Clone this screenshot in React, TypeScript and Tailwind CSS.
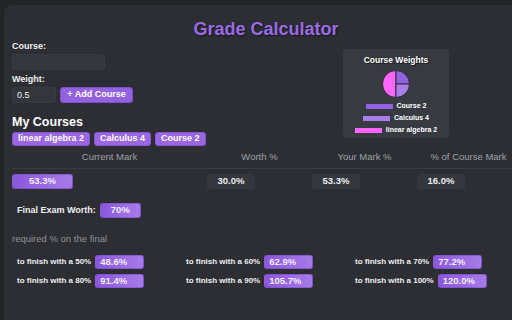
import React from "react";

const courses = ["linear algebra 2", "Calculus 4", "Course 2"];

const legend = [
  { name: "Course 2", color: "bg-[#9461e0]" },
  { name: "Calculus 4", color: "bg-[#a97ee9]" },
  { name: "linear algebra 2", color: "bg-[#ff66ff]" },
];

const targets = [
  { goal: "50%", need: "48.6%" },
  { goal: "60%", need: "62.9%" },
  { goal: "70%", need: "77.2%" },
  { goal: "80%", need: "91.4%" },
  { goal: "90%", need: "105.7%" },
  { goal: "100%", need: "120.0%" },
];

const purpleBox =
  "rounded-[3px] bg-gradient-to-r from-[#8b57db] to-[#a67be9] border border-[#7a4ac8]/60 text-[#f3eeff] font-bold";
const darkBox = "rounded-[3px] bg-[#34373d] text-[#eceef2] font-bold";

function Pie() {
  return (
    <svg width="28" height="28" viewBox="0 0 28 28" className="block mx-auto">
      <path d="M14 14 L14 0.5 A13.5 13.5 0 0 0 14 27.5 Z" fill="#ff66ff" stroke="#2c2e33" strokeWidth="1" />
      <path d="M14 14 L14 0.5 A13.5 13.5 0 0 1 27.5 14 Z" fill="#9461e0" stroke="#2c2e33" strokeWidth="1" />
      <path d="M14 14 L27.5 14 A13.5 13.5 0 0 1 14 27.5 Z" fill="#a97ee9" stroke="#2c2e33" strokeWidth="1" />
    </svg>
  );
}

export default function App() {
  return (
    <div className="w-[512px] h-[320px] overflow-hidden bg-[#222428] pt-[5px] pl-[4px] font-['Liberation_Sans',Arial,sans-serif]">
      <div className="w-[524px] h-[330px] rounded-tl-lg bg-[#2c2e33] px-2 pt-[15px]">
        <h1 className="h-[18px] text-center text-[18px] leading-[18px] font-bold text-[#9a6ce6] [text-shadow:1px_1px_2px_rgba(0,0,0,0.55)]">
          Grade Calculator
        </h1>

        <div className="mt-[2px] flex items-start">
          <div className="w-[331px]">
            <div className="h-[12px] text-[9px] leading-[12px] font-bold text-[#eceef2]">Course:</div>
            <input
              type="text"
              className="mt-[2px] block h-[16px] w-[93px] rounded-[3px] border border-[#383b41] bg-[#33363b] outline-none"
            />
            <div className="mt-[3px] h-[12px] text-[9px] leading-[12px] font-bold text-[#eceef2]">Weight:</div>
            <div className="mt-[2px] flex gap-[4px]">
              <input
                type="text"
                defaultValue="0.5"
                className="block h-[16px] w-[44px] rounded-[3px] border border-[#383b41] bg-[#33363b] px-[4px] text-[9px] text-[#eceef2] outline-none"
              />
              <button className="h-[16px] w-[73px] rounded-[3px] bg-[#9461e0] text-[9px] font-bold text-white border border-[#7f4dd0]">
                + Add Course
              </button>
            </div>
            <h2 className="mt-[12px] h-[15px] text-[12.5px] leading-[15px] font-bold text-white">My Courses</h2>
            <div className="mt-[2px] flex gap-[4px]">
              {courses.map((c) => (
                <span
                  key={c}
                  className="flex h-[14px] items-center rounded-[3px] bg-[#9a66e2] px-[5px] text-[9px] font-bold text-white border border-[#8755d6]"
                >
                  {c}
                </span>
              ))}
            </div>
          </div>

          <div className="mt-[9px] h-[89px] w-[106px] rounded-[4px] bg-[#373a41] pt-[6px]">
            <div className="h-[10px] text-center text-[8.5px] leading-[10px] font-bold text-white [text-shadow:1px_1px_1px_rgba(0,0,0,0.7)]">
              Course Weights
            </div>
            <div className="mt-[5px]">
              <Pie />
            </div>
            <div className="mt-[2px]">
              {legend.map((l) => (
                <div key={l.name} className="flex h-[12px] items-center justify-center gap-[4px]">
                  <span className={`h-[5px] w-[27px] ${l.color}`} />
                  <span className="text-[7px] font-bold text-white">{l.name}</span>
                </div>
              ))}
            </div>
          </div>
        </div>

        <div className="mt-[5px] grid grid-cols-[195px_105px_105px_1fr] text-[9.5px] leading-[12px] text-[#9ea2a9]">
          <div className="text-center">Current Mark</div>
          <div className="text-center">Worth %</div>
          <div className="text-center">Your Mark %</div>
          <div className="text-center whitespace-nowrap">% of Course Mark</div>
        </div>
        <div className="mt-[5px] h-px bg-[#393c42]" />
        <div className="mt-[5px] grid grid-cols-[195px_105px_105px_1fr] text-[9.5px]">
          <div className={`flex h-[15px] w-[61px] items-center justify-center ${purpleBox}`}>53.3%</div>
          <div className={`flex h-[15px] w-[48px] items-center justify-center ${darkBox}`}>30.0%</div>
          <div className={`flex h-[15px] w-[48px] items-center justify-center ${darkBox}`}>53.3%</div>
          <div className={`flex h-[15px] w-[48px] items-center justify-center ${darkBox}`}>16.0%</div>
        </div>

        <div className="mt-[14px] flex items-center gap-[4px] pl-[5px]">
          <span className="text-[9px] font-bold text-[#eceef2]">Final Exam Worth:</span>
          <span className={`flex h-[15px] w-[41px] items-center justify-center text-[9.5px] ${purpleBox}`}>70%</span>
        </div>

        <div className="mt-[15px] h-[12px] text-[9.5px] leading-[12px] text-[#8f939a]">required % on the final</div>

        <div className="mt-[10px] grid grid-cols-[169px_169px_169px] gap-y-[5px] pl-[5px]">
          {targets.map((t) => (
            <div key={t.goal} className="flex h-[14px] items-center gap-[4px]">
              <span className="text-[8px] font-bold text-[#eceef2] whitespace-nowrap">to finish with a {t.goal}</span>
              <span className={`flex h-[14px] w-[49px] items-center px-[4px] text-[9.5px] ${purpleBox}`}>{t.need}</span>
            </div>
          ))}
        </div>
      </div>
    </div>
  );
}
